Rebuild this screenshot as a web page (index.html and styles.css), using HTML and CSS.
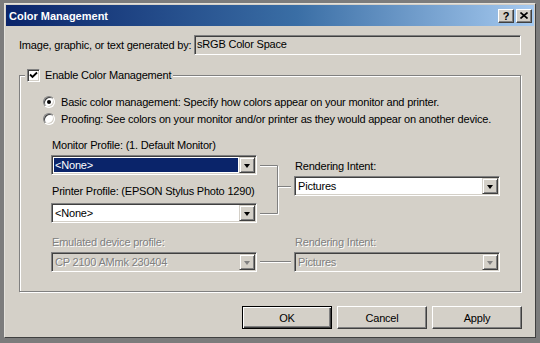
FILE: index.html
```html
<!DOCTYPE html>
<html lang="en">
<head>
  <meta charset="UTF-8">
  <title>Color Management</title>
  <link rel="stylesheet" href="styles.css">
</head>
<body>
  <div class="window">
    <div class="titlebar">
      <span class="title">Color Management</span>
      <div class="caption-btns">
        <span class="cap-btn help">?</span>
        <span class="cap-btn close">
          <svg width="8" height="7" viewBox="0 0 8 7"><path d="M0.5 0.5 L7.5 6.5 M7.5 0.5 L0.5 6.5" stroke="#000" stroke-width="1.6"/></svg>
        </span>
      </div>
    </div>

    <div class="content">
      <div class="gen-row">
        <span class="gen-label">Image, graphic, or text generated by:</span>
        <div class="textbox">sRGB Color Space</div>
      </div>

      <fieldset class="group">
        <legend class="group-title">
          <span class="checkbox">
            <svg width="9" height="9" viewBox="0 0 9 9"><path d="M1 3.5 L3.5 6 L8 1.5" fill="none" stroke="#000" stroke-width="1.8"/></svg>
          </span>
          Enable Color Management
        </legend>

        <div class="radio-row"><span class="radio on"></span>Basic color management: Specify how colors appear on your monitor and printer.</div>
        <div class="radio-row"><span class="radio"></span>Proofing: See colors on your monitor and/or printer as they would appear on another device.</div>

        <div class="profiles">
          <div class="col">
            <div class="lbl">Monitor Profile: (1. Default Monitor)</div>
            <div class="combo"><span class="combo-text"><span class="sel">&lt;None&gt;</span></span><span class="combo-btn"></span></div>
            <div class="lbl second">Printer Profile: (EPSON Stylus Photo 1290)</div>
            <div class="combo"><span class="combo-text">&lt;None&gt;</span><span class="combo-btn"></span></div>
          </div>
          <svg class="connector" width="37" height="86" viewBox="0 0 37 86">
            <path d="M3 28.5 H21.5 V76.5 H3 M21.5 49.5 H34" fill="none" stroke="#fff"/>
            <path d="M3 27.5 H20.5 V75.5 H3 M20.5 48.5 H34" fill="none" stroke="#808080"/>
          </svg>
          <div class="col right">
            <div class="lbl">Rendering Intent:</div>
            <div class="combo"><span class="combo-text">Pictures</span><span class="combo-btn"></span></div>
          </div>
        </div>

        <div class="profiles disabled">
          <div class="col">
            <div class="lbl">Emulated device profile:</div>
            <div class="combo"><span class="combo-text">CP 2100 AMmk 230404</span><span class="combo-btn"></span></div>
          </div>
          <svg class="connector" width="37" height="37" viewBox="0 0 37 37">
            <path d="M3 27.5 H34" fill="none" stroke="#fff"/>
            <path d="M3 26.5 H34" fill="none" stroke="#808080"/>
          </svg>
          <div class="col">
            <div class="lbl">Rendering Intent:</div>
            <div class="combo"><span class="combo-text">Pictures</span><span class="combo-btn"></span></div>
          </div>
        </div>
      </fieldset>

      <div class="buttons">
        <button class="btn default">OK</button>
        <button class="btn">Cancel</button>
        <button class="btn">Apply</button>
      </div>
    </div>
  </div>
</body>
</html>
```

FILE: styles.css
```css
html, body {
  margin: 0;
}

body {
  width: 540px;
  height: 343px;
  box-sizing: border-box;
  padding: 3px 4px 0 4px;
  background-color: #7c7c7c;
  font-family: "Liberation Sans", Arial, sans-serif;
  font-size: 11px;
  letter-spacing: -0.2px;
  color: #000;
  overflow: hidden;
}

.window {
  width: 532px;
  height: 335px;
  box-sizing: border-box;
  background-color: #d4d0c8;
  border: 1px solid;
  border-color: #e4e2dc #404040 #404040 #e4e2dc;
  padding: 1px;
}

/* title bar */
.titlebar {
  height: 21px;
  display: flex;
  align-items: center;
  justify-content: space-between;
  padding: 0 2px 0 3px;
  background: linear-gradient(to right, #0a246a, #3a6ea5 55%, #a6caf0);
}

.title {
  color: #fff;
  font-weight: bold;
  font-size: 11px;
  letter-spacing: 0;
}

.caption-btns {
  display: flex;
  gap: 2px;
}

.cap-btn {
  width: 16px;
  height: 14px;
  box-sizing: border-box;
  display: flex;
  align-items: center;
  justify-content: center;
  background-color: #d4d0c8;
  border: 1px solid;
  border-color: #fff #404040 #404040 #fff;
  box-shadow: inset -1px -1px 0 #808080;
}

.cap-btn.help {
  font-weight: bold;
  font-size: 11px;
  line-height: 12px;
}

/* content */
.content {
  padding: 9px 13px 0 13px;
}

.gen-row {
  display: flex;
  align-items: center;
  height: 20px;
}

.gen-label {
  width: 175px;
  flex-shrink: 0;
  white-space: nowrap;
}

.textbox {
  flex: 1;
  height: 20px;
  box-sizing: border-box;
  line-height: 16px;
  padding-left: 2px;
  border: 1px solid;
  border-color: #808080 #fff #fff #808080;
  box-shadow: inset 1px 1px 0 #404040, inset -1px -1px 0 #d4d0c8;
}

/* group box */
.group {
  margin: 13px 0 0 0;
  padding: 11px 10px 19px 23px;
  border: 1px solid #808080;
  box-shadow: inset 1px 1px 0 #fff, 1px 1px 0 #fff;
  min-width: 0;
}

.group-title {
  display: flex;
  align-items: center;
  gap: 5px;
  margin-left: -18px;
  padding: 0 2px;
  height: 14px;
  background-color: #d4d0c8;
}

.checkbox {
  width: 13px;
  height: 13px;
  box-sizing: border-box;
  display: flex;
  align-items: center;
  justify-content: center;
  background-color: #fff;
  border: 1px solid;
  border-color: #808080 #fff #fff #808080;
  box-shadow: inset 1px 1px 0 #404040, inset -1px -1px 0 #d4d0c8;
}

.radio-row {
  display: flex;
  align-items: center;
  gap: 6px;
  height: 17px;
  white-space: nowrap;
}

.radio {
  width: 12px;
  height: 12px;
  box-sizing: border-box;
  border-radius: 50%;
  background-color: #fff;
  border: 1px solid;
  border-color: #808080 #fff #fff #808080;
  box-shadow: inset 1px 1px 0 #404040, inset -1px -1px 0 #d4d0c8;
  display: flex;
  align-items: center;
  justify-content: center;
}

.radio.on::after {
  content: "";
  width: 4px;
  height: 4px;
  border-radius: 50%;
  background-color: #000;
}

/* profile combos */
.profiles {
  display: grid;
  grid-template-columns: 206px 37px 206px;
  margin: 11px 0 0 8px;
}

.profiles.disabled {
  margin-top: 11px;
  color: #808080;
  text-shadow: 1px 1px 0 #fff;
}

.col {
  display: flex;
  flex-direction: column;
}

.col.right {
  padding-top: 21px;
}

.lbl {
  height: 14px;
  line-height: 14px;
  margin: 0 0 3px 1px;
  white-space: nowrap;
}

.lbl.second {
  margin-top: 9px;
  margin-bottom: 5px;
}

.combo {
  height: 20px;
  box-sizing: border-box;
  display: flex;
  background-color: #fff;
  border: 1px solid;
  border-color: #808080 #fff #fff #808080;
  box-shadow: inset 1px 1px 0 #404040, inset -1px -1px 0 #d4d0c8;
  padding: 1px;
}

.disabled .combo {
  background-color: #d4d0c8;
}

.combo-text {
  flex: 1;
  display: flex;
  padding: 1px;
  line-height: 14px;
}

.combo-text .sel {
  flex: 1;
  background-color: #0a246a;
  color: #fff;
  padding-left: 1px;
}

.combo-text:not(:has(.sel)) {
  padding-left: 2px;
}

.combo-btn {
  width: 16px;
  height: 16px;
  box-sizing: border-box;
  background-color: #d4d0c8;
  border: 1px solid;
  border-color: #d4d0c8 #404040 #404040 #d4d0c8;
  box-shadow: inset 1px 1px 0 #fff, inset -1px -1px 0 #808080;
  display: flex;
  align-items: center;
  justify-content: center;
}

.combo-btn::after {
  content: "";
  border-left: 3.5px solid transparent;
  border-right: 3.5px solid transparent;
  border-top: 4px solid #000;
  margin-top: 1px;
}

.disabled .combo-btn::after {
  border-top-color: #808080;
}

/* dialog buttons */
.buttons {
  display: flex;
  justify-content: flex-end;
  gap: 5px;
  margin: 14px -1px 0 0;
}

.btn {
  width: 90px;
  height: 23px;
  font-family: inherit;
  font-size: 11px;
  letter-spacing: inherit;
  color: #000;
  background-color: #d4d0c8;
  border: 1px solid;
  border-color: #fff #404040 #404040 #fff;
  box-shadow: inset -1px -1px 0 #808080;
  padding: 0;
}

.btn.default {
  border: 1px solid #000;
  box-shadow: inset 1px 1px 0 #fff, inset -1px -1px 0 #404040, inset -2px -2px 0 #808080;
}
```
